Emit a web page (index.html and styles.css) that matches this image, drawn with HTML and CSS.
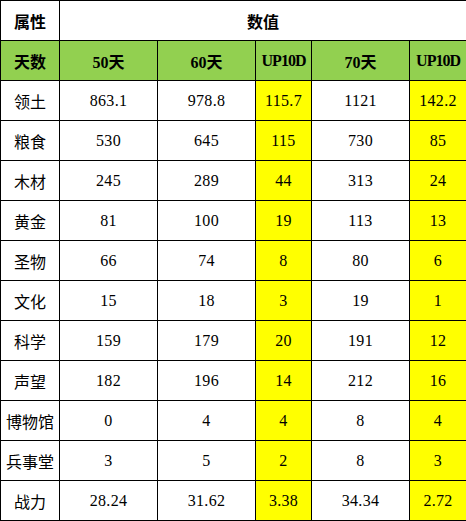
FILE: index.html
```html
<!DOCTYPE html>
<html lang="zh">
<head>
<meta charset="utf-8">
<title>属性数值</title>
<link rel="stylesheet" href="styles.css">
</head>
<body>
<table class="sheet">
  <colgroup>
    <col class="c-label">
    <col class="c-wide">
    <col class="c-wide">
    <col class="c-narrow">
    <col class="c-wide">
    <col class="c-narrow2">
  </colgroup>
  <tr class="title-row">
    <th class="label hd">属性</th>
    <th class="label hd" colspan="5">数值</th>
  </tr>
  <tr class="green-row">
    <th class="label hd">天数</th>
    <th class="num hd">50天</th>
    <th class="num hd">60天</th>
    <th class="num hd tight">UP10D</th>
    <th class="num hd">70天</th>
    <th class="num hd tight">UP10D</th>
  </tr>
  <tr><td class="label">领土</td><td class="num">863.1</td><td class="num">978.8</td><td class="num up">115.7</td><td class="num">1121</td><td class="num up">142.2</td></tr>
  <tr><td class="label">粮食</td><td class="num">530</td><td class="num">645</td><td class="num up">115</td><td class="num">730</td><td class="num up">85</td></tr>
  <tr><td class="label">木材</td><td class="num">245</td><td class="num">289</td><td class="num up">44</td><td class="num">313</td><td class="num up">24</td></tr>
  <tr><td class="label">黄金</td><td class="num">81</td><td class="num">100</td><td class="num up">19</td><td class="num">113</td><td class="num up">13</td></tr>
  <tr><td class="label">圣物</td><td class="num">66</td><td class="num">74</td><td class="num up">8</td><td class="num">80</td><td class="num up">6</td></tr>
  <tr><td class="label">文化</td><td class="num">15</td><td class="num">18</td><td class="num up">3</td><td class="num">19</td><td class="num up">1</td></tr>
  <tr><td class="label">科学</td><td class="num">159</td><td class="num">179</td><td class="num up">20</td><td class="num">191</td><td class="num up">12</td></tr>
  <tr><td class="label">声望</td><td class="num">182</td><td class="num">196</td><td class="num up">14</td><td class="num">212</td><td class="num up">16</td></tr>
  <tr><td class="label">博物馆</td><td class="num">0</td><td class="num">4</td><td class="num up">4</td><td class="num">8</td><td class="num up">4</td></tr>
  <tr><td class="label">兵事堂</td><td class="num">3</td><td class="num">5</td><td class="num up">2</td><td class="num">8</td><td class="num up">3</td></tr>
  <tr><td class="label">战力</td><td class="num">28.24</td><td class="num">31.62</td><td class="num up">3.38</td><td class="num">34.34</td><td class="num up">2.72</td></tr>
</table>
</body>
</html>
```

FILE: styles.css
```css
html, body {
  margin: 0;
  padding: 0;
  background: #ffffff;
}

.sheet {
  border-collapse: collapse;
  table-layout: fixed;
  width: 466px;
  color: #000000;
}

.c-label { width: 59px; }
.c-wide { width: 98px; }
.c-narrow { width: 56px; }
.c-narrow2 { width: 57px; }

.sheet tr {
  height: 40px;
}

.sheet th,
.sheet td {
  border: 1px solid #000000;
  padding: 0;
  text-align: center;
  vertical-align: middle;
  white-space: nowrap;
  overflow: hidden;
}

.label {
  font-family: "Noto Sans CJK SC", sans-serif;
  font-size: 16px;
  font-weight: normal;
}

.num {
  font-family: "Liberation Serif", "Noto Sans CJK SC", serif;
  font-size: 16px;
  letter-spacing: 0.3px;
}

.hd {
  font-size: 16px;
  font-weight: bold;
}

.hd.num {
  font-family: "Liberation Serif", "Noto Sans CJK SC", serif;
  letter-spacing: 0;
}

.hd.tight {
  letter-spacing: -1px;
}

.green-row th {
  background: #92d050;
}

.up {
  background: #ffff00;
}
```
